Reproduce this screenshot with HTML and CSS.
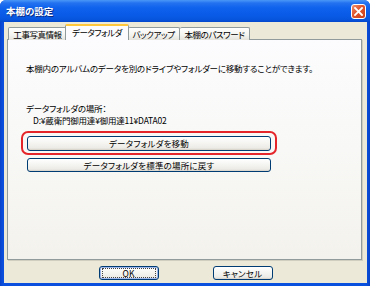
FILE: index.html
```html
<!DOCTYPE html>
<html lang="ja">
<head>
<meta charset="utf-8">
<link rel="stylesheet" href="styles.css">
</head>
<body>
<div class="window">
  <div class="titlebar">
    <span class="title">本棚の設定</span>
    <span class="close">
      <svg width="9" height="9" viewBox="0 0 9 9"><path d="M1 1 L8 8 M8 1 L1 8" stroke="#fff" stroke-width="1.8" stroke-linecap="square"/></svg>
    </span>
  </div>
  <div class="client">
    <div class="tabs">
      <div class="tab t1">工事写真情報</div>
      <div class="tab t2 active">データフォルダ</div>
      <div class="tab t3">バックアップ</div>
      <div class="tab t4">本棚のパスワード</div>
    </div>
    <div class="panel">
      <p class="desc">本棚内のアルバムのデータを別のドライブやフォルダーに移動することができます。</p>
      <p class="label">データフォルダの場所：</p>
      <p class="path">D:¥蔵衛門御用達¥御用達11¥DATA02</p>
      <div class="btn-wrap">
        <button class="btn wide">データフォルダを移動</button>
        <span class="highlight"></span>
      </div>
      <button class="btn wide second">データフォルダを標準の場所に戻す</button>
    </div>
    <div class="footer">
      <button class="btn small default"><span class="focus">OK</span></button>
      <button class="btn small">キャンセル</button>
    </div>
  </div>
</div>
</body>
</html>
```
FILE: styles.css
```css
* { box-sizing: border-box; }
html, body { margin: 0; padding: 0; }
body {
  width: 370px;
  height: 286px;
  overflow: hidden;
  font-family: "Noto Sans CJK JP", "Liberation Sans", sans-serif;
  font-size: 8.5px;
  letter-spacing: -0.45px;
  font-feature-settings: "palt";
  color: #000;
}
.window {
  width: 370px;
  height: 286px;
  display: flex;
  flex-direction: column;
  background: linear-gradient(90deg, #0843C8 0, #0A4FDE 3px, #0A50DE 366px, #0843C8 370px);
  padding: 0 3px 3px 4px;
  border-radius: 6px 6px 0 0;
}
.titlebar {
  height: 22px;
  margin: 0 -3px 0 -4px;
  padding: 0 4px 0 6px;
  display: flex;
  align-items: center;
  justify-content: space-between;
  border-radius: 6px 6px 0 0;
  background: linear-gradient(180deg, #4B98F8 0, #2472F0 3px, #0E62EC 8px, #0A5CE8 14px, #0756E0 19px, #0448CC 22px);
}
.title {
  color: #fff;
  font-weight: bold;
  font-size: 9.5px;
  letter-spacing: 0;
  text-shadow: 1px 1px 0 #0A2A80;
  margin-top: -1px;
}
.close {
  width: 15px;
  height: 15px;
  border: 1px solid #fff;
  border-radius: 3px;
  background: linear-gradient(135deg, #F09070 0, #E0552C 45%, #C8401C 100%);
  display: flex;
  align-items: center;
  justify-content: center;
}
.client {
  flex: 1;
  background: #ECE9D8;
  display: flex;
  flex-direction: column;
  padding: 2px 5px 0 3px;
}
.tabs {
  display: flex;
  align-items: flex-end;
  height: 16px;
  margin-bottom: -1px;
  padding-left: 1px;
  position: relative;
  z-index: 1;
}
.tab {
  height: 13px;
  border: 1px solid #919B9C;
  border-bottom: none;
  border-left: none;
  border-radius: 2px 2px 0 0;
  background: linear-gradient(180deg, #FFFFFF 0, #F3F3EF 60%, #E4E3DC 100%);
  text-align: center;
  line-height: 12px;
  white-space: nowrap;
}
.tab.t1 { width: 59px; border-left: 1px solid #919B9C; }
.tab.t3 { width: 52px; }
.tab.t4 { width: 70px; }
.tab.active {
  height: 16px;
  margin: 0 -1px 0 -2px;
  width: 64px;
  border-left: 1px solid #919B9C;
  border-right: 1px solid #919B9C;
  border-top: 2px solid #FFC83C;
  background: #FCFCFE;
  line-height: 12px;
  position: relative;
  z-index: 2;
}
.panel {
  height: 221px;
  border: 1px solid #919B9C;
  background: linear-gradient(180deg, #FCFCFE 0, #F8F8F6 50%, #F3F2ED 100%);
  padding: 22px 0 0 18px;
  display: flex;
  flex-direction: column;
  align-items: flex-start;
  box-shadow: 1px 1px 0 #D0CEBF;
  letter-spacing: -0.2px;
}
.panel p {
  margin: 0;
  line-height: 12px;
  white-space: nowrap;
}
.desc { margin-bottom: 28px !important; }
.path { padding-left: 7px; margin-bottom: 10px !important; letter-spacing: -0.2px; }
.btn {
  font-family: "Noto Sans CJK JP", "Liberation Sans", sans-serif;
  font-feature-settings: "palt";
  font-size: 8.5px;
  letter-spacing: 0.2px;
  color: #000;
  border: 1px solid #003C74;
  border-radius: 3px;
  background: linear-gradient(180deg, #FFFFFF 0, #F6F6F3 40%, #ECEBE6 85%, #D6D0C5 100%);
  padding: 0;
  line-height: 11px;
  display: flex;
  align-items: center;
  justify-content: center;
}
.btn-wrap {
  position: relative;
  margin-left: 1px;
}
.wide { width: 244px; height: 15px; margin-left: 1px; }
.btn-wrap .wide { margin-left: 0; }
.second { margin-top: 7px; height: 14px; }
.highlight {
  position: absolute;
  left: -6px;
  right: -6px;
  top: -5px;
  bottom: -4px;
  border: 2px solid #E4262B;
  border-radius: 7px;
  pointer-events: none;
}
.footer {
  display: flex;
  justify-content: center;
  gap: 54px;
  padding-top: 6px;
  padding-left: 2px;
}
.small { width: 60px; height: 14px; }
.default {
  box-shadow: inset 0 0 0 1px #9DB6EC;
}
.focus {
  display: block;
  width: 54px;
  height: 10px;
  border: 1px dotted #444;
  line-height: 8px;
  text-align: center;
  font-weight: normal;
}
```
